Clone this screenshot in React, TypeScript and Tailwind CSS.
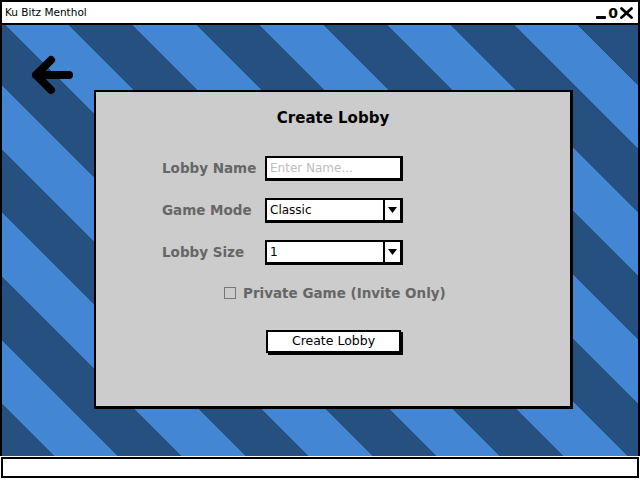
import { useState } from 'react';

const font = 'font-["DejaVu_Sans",sans-serif]';

function Select({ value }: { value: string }) {
  return (
    <div className="flex h-[25px] w-[138px] border-2 border-r-[3px] border-b-[3px] border-black bg-white">
      <div className="flex flex-1 items-center pl-[3px] text-[12px] text-black">{value}</div>
      <div className="flex w-[17px] items-center justify-center border-l-2 border-black">
        <svg width="9" height="6" viewBox="0 0 9 6">
          <path d="M0 0 L9 0 L4.5 6 Z" fill="#000" />
        </svg>
      </div>
    </div>
  );
}

export default function App() {
  const [lobbyName, setLobbyName] = useState('');
  const [isPrivate, setIsPrivate] = useState(false);

  return (
    <div className={`relative flex h-[480px] w-[640px] flex-col bg-white ${font}`}>
      {/* Title bar */}
      <div className="flex h-[25px] items-center justify-between border-2 border-black px-[3px]">
        <span className="text-[10.5px] text-black">Ku Bitz Menthol</span>
        <div className="flex items-end gap-[2px] pr-[2px] leading-none text-black">
          <span className="mb-[1px] h-[3px] w-[10px] rounded-[1px] bg-black" />
          <span className="text-[14px] font-bold">0</span>
          <svg width="13" height="12" viewBox="0 0 13 12" className="mb-[1px]">
            <path d="M1.5 1.5 L11.5 10.5 M11.5 1.5 L1.5 10.5" stroke="#000" strokeWidth="2.8" strokeLinecap="round" />
          </svg>
        </div>
      </div>

      {/* Canvas */}
      <div className="relative h-[431px] border-x-2 border-black bg-[image:repeating-linear-gradient(45deg,#26507f_0px,#26507f_37px,#4386d3_37px,#4386d3_82px,#26507f_82px,#26507f_90px)] pl-[92px] pt-[65px]">
        <button className="absolute left-[29px] top-[29px]" aria-label="Back">
          <svg width="44" height="44" viewBox="0 0 44 44">
            <path
              d="M38 21 H5 M20 6 L5 21 L20 36"
              fill="none"
              stroke="#000"
              strokeWidth="8"
              strokeLinecap="round"
              strokeLinejoin="round"
            />
          </svg>
        </button>

        <div className="flex h-[319px] w-[479px] flex-col border-2 border-r-[3px] border-b-[3px] border-black bg-[#cccccc]">
          <h1 className="mt-[16px] text-center text-[15px] font-bold leading-[20px] text-black">Create Lobby</h1>

          <div className="ml-[66px] mt-[28px] grid grid-cols-[103px_138px] items-center gap-y-[17px]">
            <label className="text-[13.5px] font-bold text-[#666666]">Lobby Name</label>
            <input
              value={lobbyName}
              onChange={(e) => setLobbyName(e.target.value)}
              placeholder="Enter Name..."
              className="block h-[25px] w-[138px] border-2 border-r-[3px] border-b-[3px] border-black bg-white pl-[3px] text-[12px] text-black outline-none placeholder:text-[#bdbdbd]"
            />

            <label className="text-[13.5px] font-bold text-[#666666]">Game Mode</label>
            <Select value="Classic" />

            <label className="text-[13.5px] font-bold text-[#666666]">Lobby Size</label>
            <Select value="1" />
          </div>

          <label className="ml-[128px] mt-[18px] flex items-center gap-[7px] text-[13.5px] font-bold text-[#666666]">
            <span
              onClick={() => setIsPrivate(!isPrivate)}
              className="flex h-[12px] w-[12px] items-center justify-center border border-[#777777] bg-[#cccccc] text-[10px] leading-none"
            >
              {isPrivate ? '✓' : ''}
            </span>
            Private Game (Invite Only)
          </label>

          <div className="ml-[170px] mt-[25px]">
            <button className="h-[23px] w-[135px] border-2 border-black bg-white text-[12.5px] text-black shadow-[2px_2px_0_#000]">
              Create Lobby
            </button>
          </div>
        </div>
      </div>

      {/* Status bar */}
      <div className="mx-[1px] mt-[1px] h-[21px] border-2 border-black bg-white" />
    </div>
  );
}
